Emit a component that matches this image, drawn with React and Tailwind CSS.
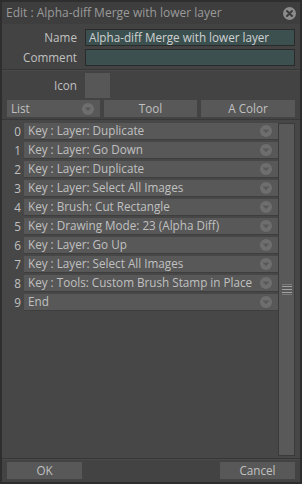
import React from "react";

const rows = [
  "Key : Layer: Duplicate",
  "Key : Layer: Go Down",
  "Key : Layer: Duplicate",
  "Key : Layer: Select All Images",
  "Key : Brush: Cut Rectangle",
  "Key : Drawing Mode: 23 (Alpha Diff)",
  "Key : Layer: Go Up",
  "Key : Layer: Select All Images",
  "Key : Tools: Custom Brush Stamp in Place",
  "End",
];

function DropCircle() {
  return (
    <svg width="12" height="12" viewBox="0 0 12 12" className="shrink-0">
      <circle cx="6" cy="6" r="6" fill="#6e6e6e" />
      <path d="M2.6 4.4 L9.4 4.4 L6 8.3 Z" fill="#585858" />
    </svg>
  );
}

function CloseIcon() {
  return (
    <svg width="13" height="13" viewBox="0 0 13 13">
      <circle cx="6.5" cy="6.5" r="6.5" fill="#8c8c8c" />
      <path d="M4 4 L9 9 M9 4 L4 9" stroke="#3c3c3c" strokeWidth="2" strokeLinecap="round" />
    </svg>
  );
}

export default function App() {
  return (
    <div
      className="w-[302px] h-[484px] bg-[#2e2e2e] p-[2px] flex flex-col text-[11.7px] leading-none overflow-hidden"
      style={{ fontFamily: '"Open Sans", "Noto Sans", sans-serif' }}
    >
      <div className="flex-1 flex flex-col bg-[#434343]">
        {/* title bar */}
        <div className="h-[22px] flex items-center justify-between pl-[4px] pr-[4px] bg-[#3e3e3e]">
          <span className="text-[#9a9a9a] text-[12px]">Edit : Alpha-diff Merge with lower layer</span>
          <CloseIcon />
        </div>

        {/* name / comment */}
        <div className="flex flex-col gap-[3px] pt-[5px] pr-[5px]">
          <div className="flex items-center h-[17px]">
            <div className="w-[75px] text-right text-[#c0c0c0]">Name</div>
            <div className="ml-[8px] flex-1 h-[17px] bg-[#3c5050] border border-[#2a2a2a] flex items-center pl-[3px] text-[#d0d0d0]">
              Alpha-diff Merge with lower layer
            </div>
          </div>
          <div className="flex items-center h-[17px]">
            <div className="w-[75px] text-right text-[#c0c0c0]">Comment</div>
            <div className="ml-[8px] flex-1 h-[17px] bg-[#3c5050] border border-[#2a2a2a]" />
          </div>
        </div>

        <div className="mt-[3px] h-px bg-[#363636]" />
        <div className="h-px bg-[#4a4a4a]" />

        {/* icon */}
        <div className="flex items-center pt-[2px] pr-[5px]">
          <div className="w-[75px] text-right text-[#c0c0c0]">Icon</div>
          <div className="ml-[8px] w-[25px] h-[25px] bg-[#575757]" />
        </div>

        {/* tabs */}
        <div className="flex gap-[4px] px-[5px] mt-[2px]">
          <div className="w-[93px] h-[17px] bg-[#585858] flex items-center justify-between pl-[4px] pr-[6px] text-[#c0c0c0]">
            <span>List</span>
            <DropCircle />
          </div>
          <div className="w-[93px] h-[17px] bg-[#585858] flex items-center justify-center text-[#c0c0c0]">Tool</div>
          <div className="flex-1 h-[17px] bg-[#585858] flex items-center justify-center text-[#c0c0c0]">A Color</div>
        </div>

        {/* list panel */}
        <div className="mt-[2px] flex-1 flex bg-[#474747] border-t border-[#383838] pr-[5px] pt-[3px]">
          <div className="flex-1 flex flex-col gap-[2px]">
            {rows.map((r, i) => (
              <div key={i} className="flex items-center h-[17px]">
                <div className="w-[22px] text-right pr-[3px] text-[#c0c0c0]">{i}</div>
                <div className="flex-1 h-[17px] bg-[#585858] border-b border-[#3e3e3e] flex items-center justify-between pl-[4px] pr-[6px] text-[#c0c0c0]">
                  <span>{r}</span>
                  <DropCircle />
                </div>
              </div>
            ))}
          </div>
          <div className="w-[17px] bg-[#595959] border border-[#3a3a3a] mb-[2px] flex items-center justify-center">
            <div className="flex flex-col gap-[2px] border-y border-[#7a7a7a] py-[1px]">
              <div className="w-[10px] h-px bg-[#a0a0a0]" />
              <div className="w-[10px] h-px bg-[#a0a0a0]" />
              <div className="w-[10px] h-px bg-[#a0a0a0]" />
            </div>
          </div>
        </div>

        <div className="h-px bg-[#363636]" />
        <div className="h-px bg-[#4a4a4a]" />

        {/* footer */}
        <div className="flex justify-between px-[5px] pt-[2px] pb-[3px]">
          <div className="w-[75px] h-[17px] bg-[#585858] flex items-center justify-center text-[#c0c0c0]">OK</div>
          <div className="w-[75px] h-[17px] bg-[#585858] flex items-center justify-center text-[#c0c0c0]">Cancel</div>
        </div>
      </div>
    </div>
  );
}
